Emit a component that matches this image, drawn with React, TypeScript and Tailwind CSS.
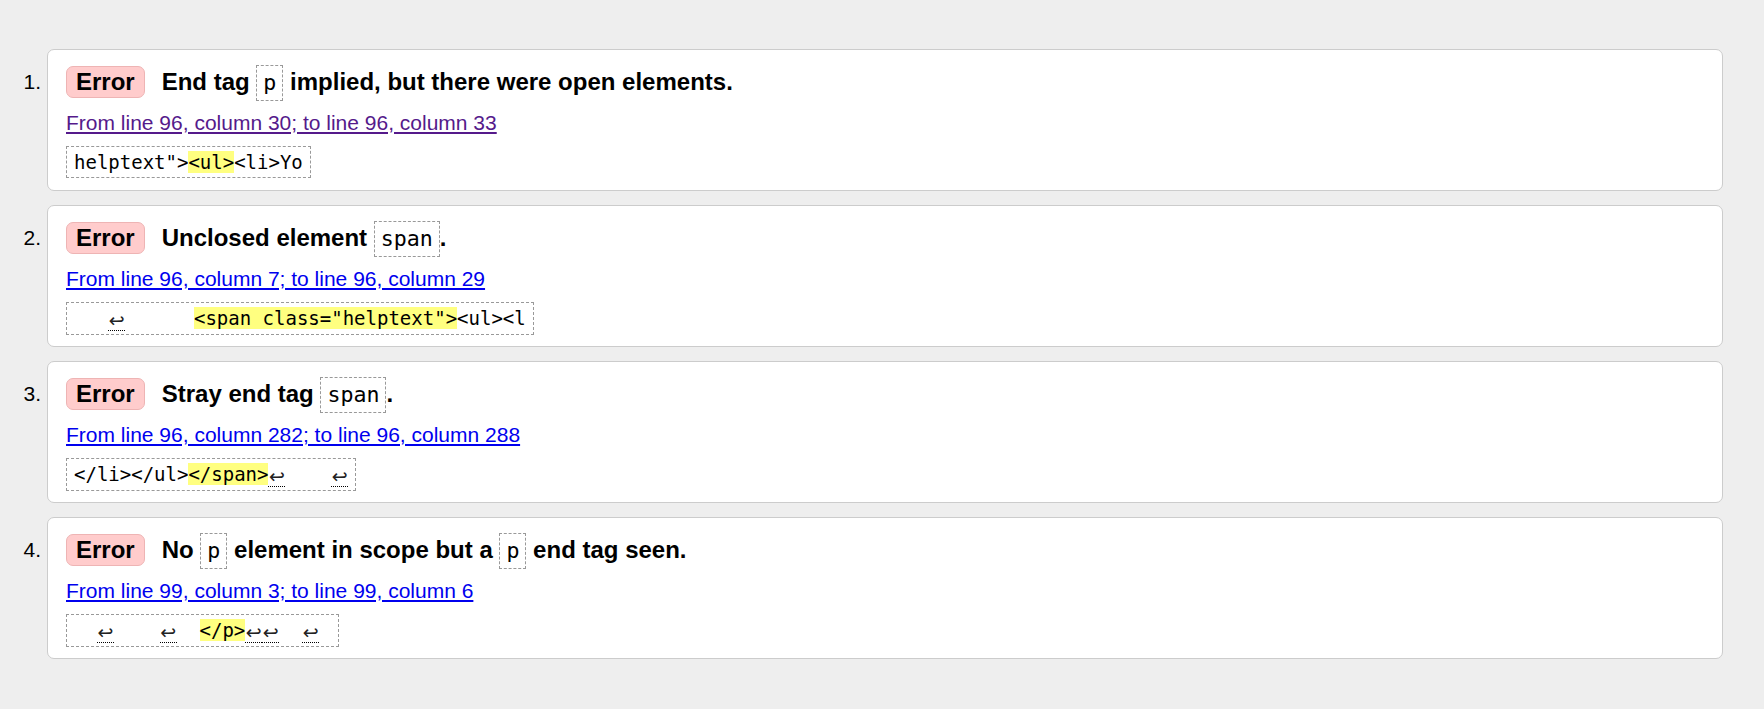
type Part = string | { hl: string } | { lf: true };

interface Message {
  title: (string | { code: string })[];
  link: string;
  visited?: boolean;
  extract: Part[];
}

const messages: Message[] = [
  {
    title: ['End tag ', { code: 'p' }, ' implied, but there were open elements.'],
    link: 'From line 96, column 30; to line 96, column 33',
    visited: true,
    extract: ['helptext">', { hl: '<ul>' }, '<li>Yo'],
  },
  {
    title: ['Unclosed element ', { code: 'span' }, '.'],
    link: 'From line 96, column 7; to line 96, column 29',
    extract: ['   ', { lf: true }, '      ', { hl: '<span class="helptext">' }, '<ul><l'],
  },
  {
    title: ['Stray end tag ', { code: 'span' }, '.'],
    link: 'From line 96, column 282; to line 96, column 288',
    extract: ['</li></ul>', { hl: '</span>' }, { lf: true }, '    ', { lf: true }],
  },
  {
    title: ['No ', { code: 'p' }, ' element in scope but a ', { code: 'p' }, ' end tag seen.'],
    link: 'From line 99, column 3; to line 99, column 6',
    extract: [
      '  ',
      { lf: true },
      '    ',
      { lf: true },
      '  ',
      { hl: '</p>' },
      { lf: true },
      { lf: true },
      '  ',
      { lf: true },
      ' ',
    ],
  },
];

const mono = "font-['DejaVu_Sans_Mono','Liberation_Mono',monospace]";

function ExtractPart({ part }: { part: Part }) {
  if (typeof part === 'string') return <>{part}</>;
  if ('hl' in part) return <span className="bg-[#ffff80]">{part.hl}</span>;
  return (
    <span className="inline-block w-[17px] text-center leading-[20px] text-[19px] text-[#222] font-['Noto_Sans','DejaVu_Sans',sans-serif] border-b border-dotted border-black align-[-2px]">
      ↩
    </span>
  );
}

function MessageCard({ index, msg }: { index: number; msg: Message }) {
  return (
    <li className="flex">
      <div className="w-[41px] shrink-0 mt-[15px] text-right text-[21px] leading-[36px] text-black">
        {index}.
      </div>
      <div className="ml-[6px] flex-1 h-[142px] bg-white border border-[#cccccc] rounded-[7px] px-[18px] pt-[14px]">
        <p className="text-[24px] font-bold leading-[36px] text-black whitespace-nowrap">
          <span className="inline-block mr-[17px] px-[9px] leading-[30px] bg-[#ffcccc] border border-[#eeb4b4] rounded-[7px]">
            Error
          </span>
          {msg.title.map((t, i) =>
            typeof t === 'string' ? (
              <span key={i}>{t}</span>
            ) : (
              <code
                key={i}
                className={`inline-block px-[6px] py-[4px] leading-[26px] text-[21.6px] font-normal border border-dashed border-[#999999] ${mono}`}
              >
                {t.code}
              </code>
            )
          )}
        </p>
        <p className="mt-[10px] text-[21px] leading-[24px]">
          <a
            href="#"
            className={`underline ${msg.visited ? 'text-[#551a8b]' : 'text-[#0000ee]'}`}
          >
            {msg.link}
          </a>
        </p>
        <div className="mt-[11px]">
          <code
            className={`inline-block whitespace-pre border border-dashed border-[#999999] px-[7px] py-[3px] text-[19px] leading-[24px] text-black ${mono}`}
          >
            {msg.extract.map((p, i) => (
              <ExtractPart key={i} part={p} />
            ))}
          </code>
        </div>
      </div>
    </li>
  );
}

export default function App() {
  return (
    <div className="min-h-[709px] bg-[#eeeeee] font-['Liberation_Sans',Arial,sans-serif] pt-[49px] pr-[41px]">
      <ol className="flex flex-col gap-[14px]">
        {messages.map((m, i) => (
          <MessageCard key={i} index={i + 1} msg={m} />
        ))}
      </ol>
    </div>
  );
}
